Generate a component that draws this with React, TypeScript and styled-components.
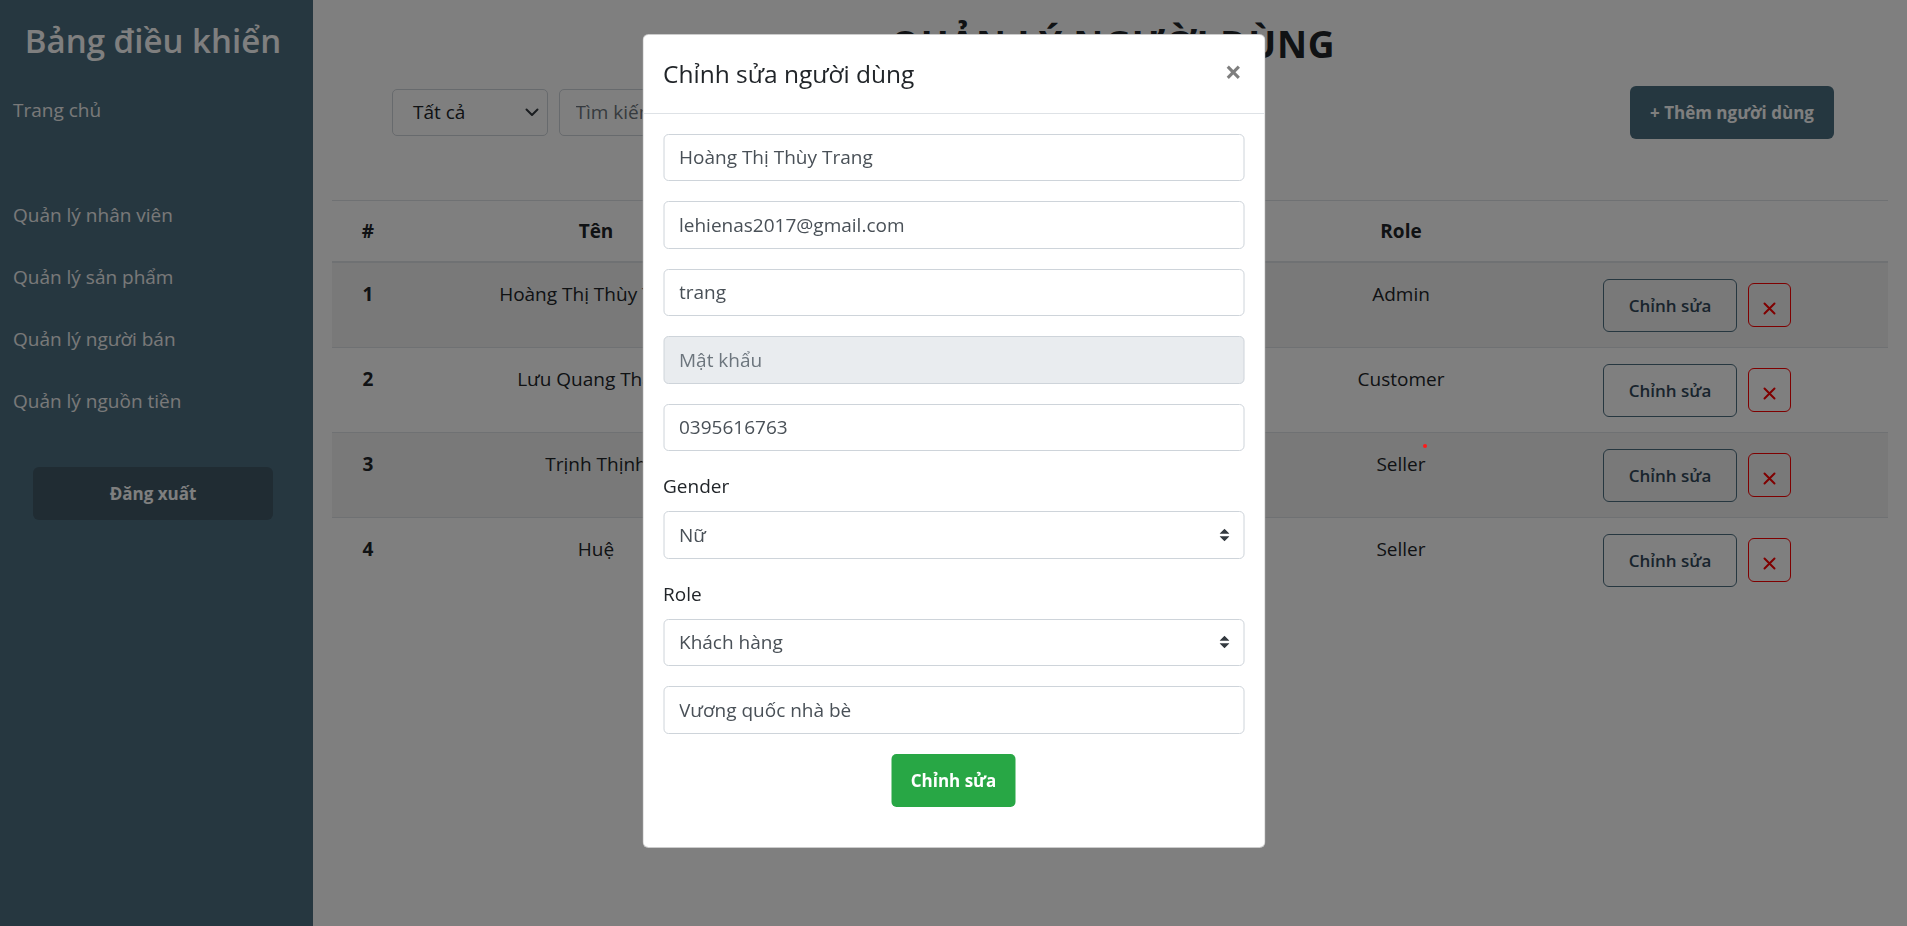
import React from "react";
import styled, { createGlobalStyle } from "styled-components";

const FONT = `"Segoe UI", "Open Sans", "Noto Sans", sans-serif`;

const GlobalStyle = createGlobalStyle`
  html, body { margin: 0; padding: 0; height: 100%; overflow: hidden; }
  body { font-family: ${FONT}; color: #212529; background: #fff; }
  *, *::before, *::after { box-sizing: border-box; }
  button, input, select { font-family: ${FONT}; }
`;

const Layout = styled.div`
  display: flex;
  height: 100vh;
`;

/* ---------- Sidebar ---------- */
const Sidebar = styled.aside`
  width: 313px;
  flex-shrink: 0;
  background: #4c6e80;
  padding-top: 20px;
  display: flex;
  flex-direction: column;
`;

const Brand = styled.h3`
  margin: 0;
  padding-right: 7px;
  text-align: center;
  color: #fff;
  font-size: 33px;
  font-weight: 600;
  line-height: 42px;
`;

const NavLink = styled.a`
  display: block;
  padding: 15.75px 13px;
  font-size: 19px;
  line-height: 30.5px;
  color: #f2f2f2;
  text-decoration: none;
`;

const HomeLink = styled(NavLink)`
  margin-top: 17px;
`;

const NavGroup = styled.nav`
  margin-top: 43px;
  display: flex;
  flex-direction: column;
`;

const LogoutButton = styled.button`
  margin: 35px 0 0 33px;
  width: 240px;
  height: 52.5px;
  border: none;
  border-radius: 6px;
  background: #405866;
  color: #fff;
  font-size: 17px;
  font-weight: 700;
`;

/* ---------- Main ---------- */
const Main = styled.main`
  flex: 1;
  min-width: 0;
  padding: 0 19px;
`;

const PageTitle = styled.h2`
  margin: 21.5px 0 0;
  padding-left: 6px;
  text-align: center;
  font-size: 37px;
  font-weight: 700;
  letter-spacing: 0.8px;
  line-height: 43px;
  color: #212529;
`;

const Toolbar = styled.div`
  display: flex;
  align-items: center;
  justify-content: space-between;
  margin-top: 21.5px;
  padding: 0 54px 0 60px;
`;

const FilterGroup = styled.div`
  display: flex;
  gap: 10.5px;
`;

const FilterSelect = styled.div`
  width: 156px;
  height: 47.5px;
  border: 1px solid #ced4da;
  border-radius: 5px;
  display: flex;
  align-items: center;
  justify-content: space-between;
  padding: 0 8px 0 20px;
  font-size: 19px;
  color: #212529;
  background: #fff;
`;

const SearchInput = styled.input`
  width: 420px;
  height: 47.5px;
  border: 1px solid #ced4da;
  border-radius: 5px;
  padding: 0 16px;
  font-size: 19px;
  color: #495057;
  &::placeholder { color: #6c757d; }
`;

const AddButton = styled.button`
  width: 204px;
  height: 52.5px;
  border: none;
  border-radius: 6px;
  background: #4a6e80;
  color: #fff;
  font-size: 17px;
  font-weight: 700;
`;

const Table = styled.table`
  width: 100%;
  margin-top: 61px;
  border-collapse: collapse;
  table-layout: fixed;
  font-size: 19px;
  color: #212529;
`;

const Th = styled.th<{ $w?: number }>`
  width: ${(p) => (p.$w ? `${p.$w}px` : "auto")};
  padding: 15px 15px 15.5px;
  line-height: 30px;
  font-weight: 700;
  text-align: center;
  vertical-align: bottom;
  border-top: 1px solid #dee2e6;
  border-bottom: 2.5px solid #dee2e6;
`;

const Row = styled.tr`
  &:nth-child(odd) { background: rgba(0, 0, 0, 0.05); }
`;

const Td = styled.td<{ $bold?: boolean }>`
  padding: 15.5px 15px;
  line-height: 30px;
  text-align: center;
  vertical-align: top;
  border-top: 1px solid #dee2e6;
  font-weight: ${(p) => (p.$bold ? 700 : 400)};
  white-space: nowrap;
`;

const ActionCell = styled(Td)`
  text-align: left;
`;

const Actions = styled.div`
  display: flex;
  align-items: center;
  gap: 11px;
`;

const EditButton = styled.button`
  width: 134px;
  height: 53px;
  border: 1px solid #4c6e80;
  border-radius: 6px;
  background: transparent;
  color: #33495a;
  font-size: 17px;
  font-weight: 600;
`;

const DeleteButton = styled.button`
  width: 43px;
  height: 44px;
  border: 1px solid #ff0000;
  border-radius: 6px;
  background: transparent;
  color: #ff0000;
  display: flex;
  align-items: center;
  justify-content: center;
  padding: 6px 0 0;
`;

/* ---------- Modal ---------- */
const Backdrop = styled.div`
  position: fixed;
  inset: 0;
  background: rgba(0, 0, 0, 0.5);
`;

const Dialog = styled.div`
  position: fixed;
  top: 34px;
  left: 50%;
  transform: translateX(-50%);
  width: 623px;
  background: #fff;
  border: 1px solid rgba(0, 0, 0, 0.2);
  border-radius: 6px;
`;

const DialogHeader = styled.div`
  display: flex;
  align-items: center;
  justify-content: space-between;
  padding: 20px;
  border-bottom: 1px solid #dee2e6;
`;

const DialogTitle = styled.h5`
  margin: 0;
  font-size: 24.5px;
  font-weight: 500;
  line-height: 37.5px;
  color: #212529;
`;

const CloseButton = styled.button`
  border: none;
  background: transparent;
  padding: 0 2px 4px 0;
  font-size: 30px;
  font-weight: 700;
  line-height: 1;
  color: #000;
  opacity: 0.5;
  text-shadow: 0 1px 0 #fff;
`;

const DialogBody = styled.form`
  padding: 20px;
`;

const FormGroup = styled.div`
  margin-bottom: 20px;
`;

const Label = styled.label`
  display: block;
  margin-bottom: 10px;
  font-size: 19px;
  line-height: 30px;
  color: #212529;
`;

const TextInput = styled.input`
  display: block;
  width: 100%;
  height: 47.5px;
  padding: 0 15px;
  font-size: 19px;
  color: #495057;
  background: #fff;
  border: 1px solid #ced4da;
  border-radius: 5px;
  &:disabled { background: #e9ecef; }
  &::placeholder { color: #6c757d; }
`;

const SelectWrap = styled.div`
  position: relative;
`;

const Select = styled.select`
  display: block;
  width: 100%;
  height: 47.5px;
  padding: 0 40px 0 15px;
  font-size: 19px;
  color: #495057;
  background: #fff;
  border: 1px solid #ced4da;
  border-radius: 5px;
  appearance: none;
`;

const SelectArrow = styled.svg`
  position: absolute;
  right: 15px;
  top: 50%;
  transform: translateY(-50%);
  pointer-events: none;
`;

const SubmitButton = styled.button`
  display: block;
  margin: 0 auto 20px;
  width: 124px;
  height: 53px;
  border: none;
  border-radius: 5px;
  background: #28a745;
  color: #fff;
  font-size: 17px;
  font-weight: 700;
`;

const CursorDot = styled.div`
  position: fixed;
  left: 1423px;
  top: 444px;
  width: 4px;
  height: 4px;
  border-radius: 50%;
  background: #ff1a1a;
`;

type User = { id: number; name: string; email: string; phone: string; role: string };

const users: User[] = [
  { id: 1, name: "Hoàng Thị Thùy Trang", email: "lehienas2017@gmail.com", phone: "0395616763", role: "Admin" },
  { id: 2, name: "Lưu Quang Thắng", email: "thang@gmail.com", phone: "0912345678", role: "Customer" },
  { id: 3, name: "Trịnh Thịnh", email: "thinh@gmail.com", phone: "0987654321", role: "Seller" },
  { id: 4, name: "Huệ", email: "hue@gmail.com", phone: "0901234567", role: "Seller" },
];

const DoubleArrow = () => (
  <SelectArrow width="10" height="13" viewBox="0 0 4 5">
    <path fill="#343a40" d="M2 0L0 2h4zm0 5L0 3h4z" />
  </SelectArrow>
);

export default function App() {
  return (
    <>
      <GlobalStyle />
      <Layout>
        <Sidebar>
          <Brand>Bảng điều khiển</Brand>
          <HomeLink href="#">Trang chủ</HomeLink>
          <NavGroup>
            <NavLink href="#">Quản lý nhân viên</NavLink>
            <NavLink href="#">Quản lý sản phẩm</NavLink>
            <NavLink href="#">Quản lý người bán</NavLink>
            <NavLink href="#">Quản lý nguồn tiền</NavLink>
          </NavGroup>
          <LogoutButton>Đăng xuất</LogoutButton>
        </Sidebar>

        <Main>
          <PageTitle>QUẢN LÝ NGƯỜI DÙNG</PageTitle>
          <Toolbar>
            <FilterGroup>
              <FilterSelect>
                <span>Tất cả</span>
                <svg width="14" height="9" viewBox="0 0 14 9">
                  <path d="M1.5 1.5l5.5 5.5 5.5-5.5" fill="none" stroke="#343a40" strokeWidth="2" strokeLinecap="round" strokeLinejoin="round" />
                </svg>
              </FilterSelect>
              <SearchInput placeholder="Tìm kiếm..." />
            </FilterGroup>
            <AddButton>+ Thêm người dùng</AddButton>
          </Toolbar>

          <Table>
            <thead>
              <tr>
                <Th $w={72}>#</Th>
                <Th $w={384}>Tên</Th>
                <Th $w={260}>Email</Th>
                <Th $w={166}>SĐT</Th>
                <Th $w={374}>Role</Th>
                <Th></Th>
              </tr>
            </thead>
            <tbody>
              {users.map((u) => (
                <Row key={u.id}>
                  <Td $bold>{u.id}</Td>
                  <Td>{u.name}</Td>
                  <Td>{u.email}</Td>
                  <Td>{u.phone}</Td>
                  <Td>{u.role}</Td>
                  <ActionCell>
                    <Actions>
                      <EditButton>Chỉnh sửa</EditButton>
                      <DeleteButton aria-label="Xóa">
                        <svg width="13" height="13" viewBox="0 0 13 13">
                          <path d="M1.5 1.5l10 10M11.5 1.5l-10 10" stroke="currentColor" strokeWidth="2" strokeLinecap="round" />
                        </svg>
                      </DeleteButton>
                    </Actions>
                  </ActionCell>
                </Row>
              ))}
            </tbody>
          </Table>
        </Main>
      </Layout>

      <Backdrop />
      <Dialog>
        <DialogHeader>
          <DialogTitle>Chỉnh sửa người dùng</DialogTitle>
          <CloseButton type="button" aria-label="Close">×</CloseButton>
        </DialogHeader>
        <DialogBody onSubmit={(e) => e.preventDefault()}>
          <FormGroup>
            <TextInput defaultValue="Hoàng Thị Thùy Trang" />
          </FormGroup>
          <FormGroup>
            <TextInput defaultValue="lehienas2017@gmail.com" />
          </FormGroup>
          <FormGroup>
            <TextInput defaultValue="trang" />
          </FormGroup>
          <FormGroup>
            <TextInput type="password" placeholder="Mật khẩu" disabled />
          </FormGroup>
          <FormGroup>
            <TextInput defaultValue="0395616763" />
          </FormGroup>
          <FormGroup>
            <Label>Gender</Label>
            <SelectWrap>
              <Select defaultValue="female">
                <option value="male">Nam</option>
                <option value="female">Nữ</option>
              </Select>
              <DoubleArrow />
            </SelectWrap>
          </FormGroup>
          <FormGroup>
            <Label>Role</Label>
            <SelectWrap>
              <Select defaultValue="customer">
                <option value="admin">Admin</option>
                <option value="customer">Khách hàng</option>
                <option value="seller">Người bán</option>
              </Select>
              <DoubleArrow />
            </SelectWrap>
          </FormGroup>
          <FormGroup>
            <TextInput defaultValue="Vương quốc nhà bè" />
          </FormGroup>
          <SubmitButton type="submit">Chỉnh sửa</SubmitButton>
        </DialogBody>
      </Dialog>
      <CursorDot />
    </>
  );
}
